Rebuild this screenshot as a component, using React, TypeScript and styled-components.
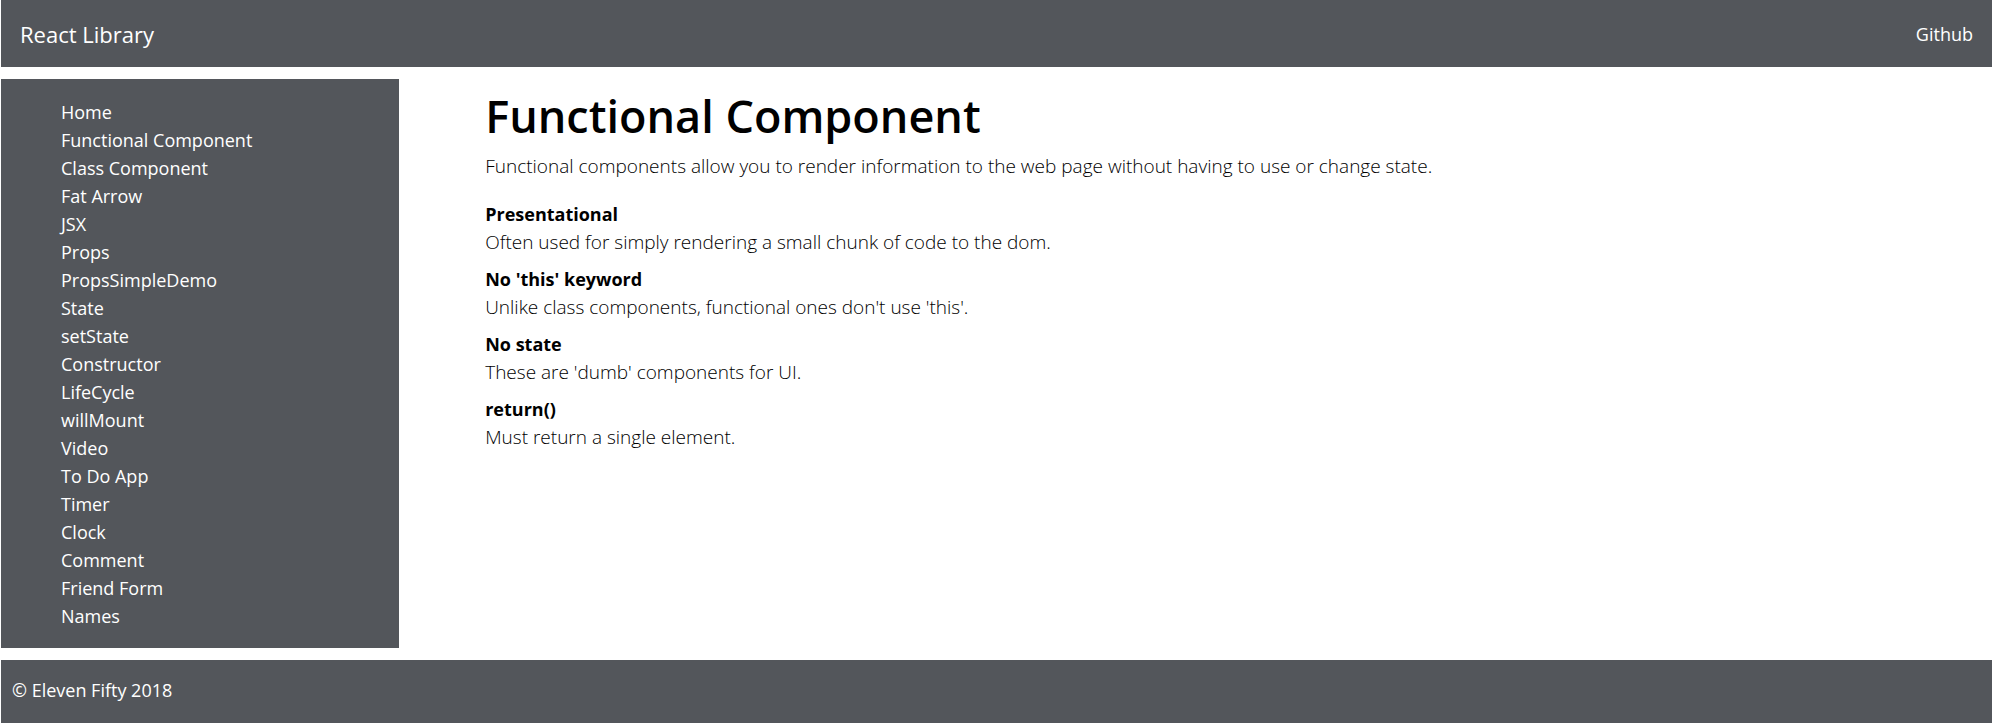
import React from 'react';
import styled, { createGlobalStyle } from 'styled-components';

const GlobalStyle = createGlobalStyle`
  *, *::before, *::after { box-sizing: border-box; }
  body {
    margin: 0;
    background: #fff;
    color: #000;
    font: 400 18px/28px "Open Sans", "Noto Sans", sans-serif;
  }
`;

const Page = styled.div`
  display: flex;
  flex-direction: column;
  gap: 12px;
  padding: 0 2px 1px 1px;
`;

const Bar = styled.header`
  display: flex;
  align-items: center;
  justify-content: space-between;
  min-height: 67px;
  padding: 0 19px;
  background: #53565b;
`;

const BarLink = styled.a<{ $brand?: boolean }>`
  color: #fff;
  text-decoration: none;
  font-size: ${({ $brand }) => ($brand ? 22 : 18)}px;
`;

const Body = styled.div`
  display: grid;
  grid-template-columns: 20% 1fr;
`;

const Sidebar = styled.nav`
  background: #53565b;
  padding: 19px 0 18px;
`;

const Menu = styled.ul`
  margin: 0;
  padding: 0 0 0 60px;
  list-style: none;
`;

const MenuLink = styled.a`
  color: #fff;
  text-decoration: none;
`;

const Main = styled.main`
  padding: 6px 20px 0 86px;
`;

const Title = styled.h1`
  margin: 0 0 5px;
  font-size: 45px;
  line-height: 62px;
  font-weight: 600;
`;

const Lead = styled.p`
  margin: 0 0 20px;
  font-size: 19px;
  font-weight: 300;
`;

const Facts = styled.dl`
  margin: 0;
`;

const Term = styled.dt`
  font-weight: 700;
`;

const Detail = styled.dd`
  margin: 0 0 9px;
  font-size: 19px;
  font-weight: 300;
`;

const Footer = styled.footer`
  min-height: 63px;
  padding: 16px 11px;
  background: #53565b;
  color: #fff;
`;

const links = [
  'Home', 'Functional Component', 'Class Component', 'Fat Arrow', 'JSX', 'Props',
  'PropsSimpleDemo', 'State', 'setState', 'Constructor', 'LifeCycle', 'willMount',
  'Video', 'To Do App', 'Timer', 'Clock', 'Comment', 'Friend Form', 'Names',
];

const facts = [
  ['Presentational', 'Often used for simply rendering a small chunk of code to the dom.'],
  ["No 'this' keyword", "Unlike class components, functional ones don't use 'this'."],
  ['No state', "These are 'dumb' components for UI."],
  ['return()', 'Must return a single element.'],
];

export default function App() {
  return (
    <Page>
      <GlobalStyle />
      <Bar>
        <BarLink href="#" $brand>React Library</BarLink>
        <BarLink href="#github">Github</BarLink>
      </Bar>
      <Body>
        <Sidebar>
          <Menu>
            {links.map((label) => (
              <li key={label}><MenuLink href={`#${label}`}>{label}</MenuLink></li>
            ))}
          </Menu>
        </Sidebar>
        <Main>
          <Title>Functional Component</Title>
          <Lead>Functional components allow you to render information to the web page without having to use or change state.</Lead>
          <Facts>
            {facts.map(([term, detail]) => (
              <React.Fragment key={term}>
                <Term>{term}</Term>
                <Detail>{detail}</Detail>
              </React.Fragment>
            ))}
          </Facts>
        </Main>
      </Body>
      <Footer>© Eleven Fifty 2018</Footer>
    </Page>
  );
}
